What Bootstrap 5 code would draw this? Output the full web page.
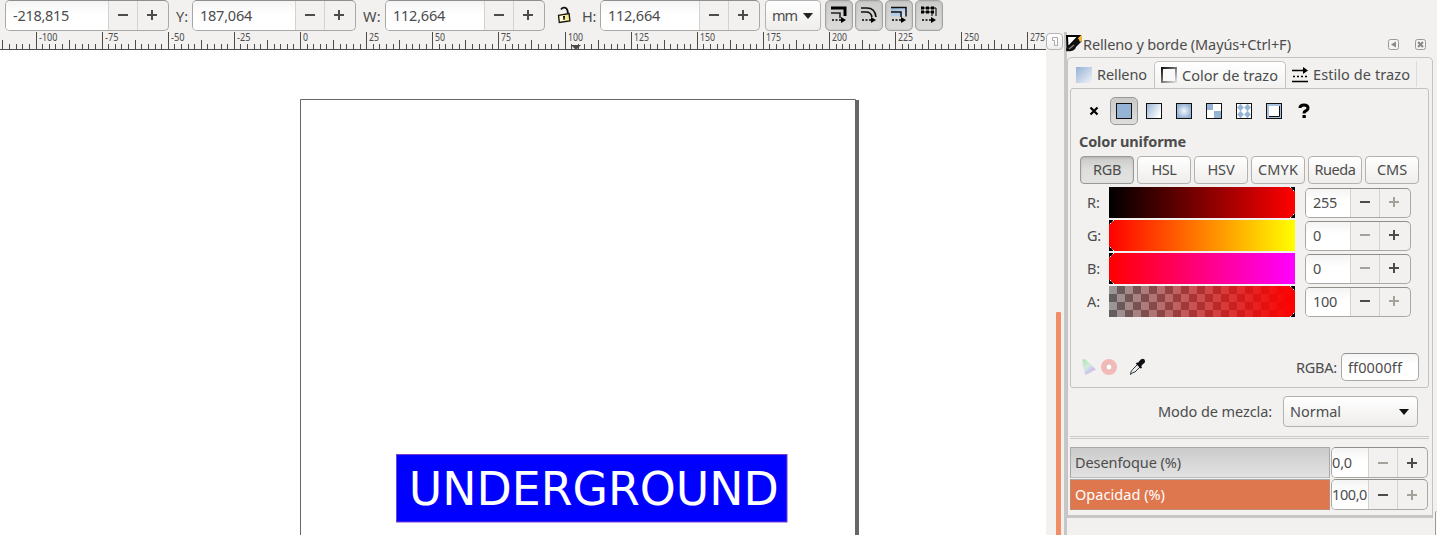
<!DOCTYPE html>
<html lang="es">
<head>
<meta charset="utf-8">
<title>Relleno y borde</title>
<link href="https://cdn.jsdelivr.net/npm/bootstrap@5.3.0/dist/css/bootstrap.min.css" rel="stylesheet">
<style>
body{background:#f2f1f0;color:#4c4c4c;font:14.5px/18px "Noto Sans","Open Sans",sans-serif;height:535px;overflow:hidden}
svg{display:block;flex:none}
.fit{display:inline-block;white-space:nowrap;flex:none;padding-bottom:1px}
.topbar{height:32px}
.topbar .fit{padding-bottom:2px}
.lab{flex:none}
.topbar .lab{padding-top:7px}
.spin{flex:none;height:31px;border:1px solid #a9a8a5;border-top-color:#8f8e8b;border-radius:5px;background:#f2f1f0;overflow:hidden}
.spin .val{flex:1;min-width:0;height:100%;padding-left:7px;background:linear-gradient(#f4f4f4,#fff 45%);display:flex;align-items:center;white-space:nowrap}
.spin .stepb{width:29px;height:100%;border:0;border-left:1px solid #d3d2d0;padding:0 0 2px;background:none;display:flex;align-items:center;justify-content:center;color:#4c4c4c;flex:none}
.spin .stepb.off{color:#a5a19b}
.spin .stepb:last-child{width:31px;padding-right:3px}
.combo,.pick{border:1px solid #b3b2af;border-radius:4px;background:linear-gradient(#fff,#eeedeb);color:#4c4c4c;flex:none;padding:0}
.pick{height:28px;width:54px;margin-right:3px;line-height:18px;padding-bottom:2px}
.down{border-color:#999;background:linear-gradient(#c9c9c8,#dededd 50%,#e3e3e2);box-shadow:inset 0 1px 2px #9997}
.tog{width:28px;height:31px;margin-right:2px;border:1px solid #a4a3a1;border-radius:5px;flex:none;padding:0;background:linear-gradient(#cbcbca,#dcdcdb);box-shadow:inset 0 0 2px #8888}
.stage{width:1046px;flex:none}
#ruler{overflow:visible}
.gutter{width:18px;flex:none}
.rbtn{width:17px;height:17px;margin-top:1px;border:1px solid #b5b4b2;border-radius:4px;background:linear-gradient(#fff,#eee)}
.thumb{width:5px;height:223px;background:#f08e68;margin:262px 0 0 10px;border-radius:1px 1px 0 0}
.dock{border-left:3px solid #c8c7c5;width:373px;position:relative}
.corner{position:absolute;right:0;bottom:0;width:2px;height:24px;border-left:1px solid #999;border-top:1px solid #bbb;border-radius:3px 0 0 0;background:#fafafa}
.outer{width:366px;height:461px;border:1px solid #c4c3c1;border-bottom:3px solid #c8c7c5;border-radius:5px 5px 0 0}
.tabs{height:30px;padding-top:3px}
.tabx{height:27px;display:flex;align-items:center}
.tabx.on{width:132px;border:1px solid #c4c3c1;border-bottom:0;border-radius:5px 5px 0 0;background:linear-gradient(#fff,#f2f1f0)}
.inner{width:359px;height:300px;margin-left:2px;border:1px solid #c4c3c1;border-radius:3px}
.kinds{height:28px;margin-top:8px}
.kind{width:30px;height:28px;display:flex;align-items:center;justify-content:center}
.kind.sel{width:28px;margin:0 1px;border:1px solid #999;border-radius:5px;background:linear-gradient(#c9c9c8,#dededd)}
.chan{height:31px;margin-bottom:2px}
.chan .lab{width:38px;padding-left:16px}
.chan .spin{width:106px;height:30px;margin-left:10px}
.strip{width:186px;height:31px;flex:none}
.hex{width:78px;height:28px;border:1px solid #a9a8a5;border-top-color:#8f8e8b;border-radius:5px;background:linear-gradient(#f5f5f5,#fff 40%);padding-left:6px;display:flex;align-items:center;flex:none}
.hexrow .fit{padding:0}
.rule2{height:3px;width:359px;margin:9px 0 0 2px;border:1px solid #cbcac8;border-width:1px 0}
.meter{width:260px;height:31px;border:1px solid #a9a8a8;border-bottom-color:#bbb;background:linear-gradient(#cbcbcb,#e2e2e2);padding-left:4px;display:flex;align-items:center;flex:none}
.meter.full{background:#df774e;color:#fff;border-color:#c08a74;border-top-color:#aaa}
.mrow .spin{width:97px;margin-left:1px}
.mrow .val{padding-left:0;flex:0 0 36px}
.mrow .spin .stepb{padding-bottom:0}
.mrow .spin .stepb:last-child{width:30px;padding-right:2px}
</style>
<script src="https://cdn.jsdelivr.net/npm/bootstrap@5.3.0/dist/js/bootstrap.bundle.min.js"></script>
</head>
<body>
<svg width="0" height="0" style="position:absolute"><defs>
<symbol id="minus" viewBox="0 0 12 12"><path d="M1 6h10" stroke="currentColor" stroke-width="2"/></symbol>
<symbol id="plus" viewBox="0 0 12 12"><path d="M1 6h10M6 1v10" stroke="currentColor" stroke-width="2"/></symbol>
<linearGradient id="gl" x2="1" y2=".6"><stop stop-color="#95b3d5"/><stop offset="1" stop-color="#fff"/></linearGradient>
<radialGradient id="gr"><stop stop-color="#f4f8fc"/><stop offset="1" stop-color="#95b3d5"/></radialGradient>
<linearGradient id="gf" x2="1" y2="1"><stop stop-color="#93b2d6"/><stop offset="1" stop-color="#f2f4f6"/></linearGradient>
<linearGradient id="gs" x2="1" y2="1"><stop stop-color="#111"/><stop offset="1" stop-color="#ddd"/></linearGradient>
<linearGradient id="gb" x2="1" y2="1"><stop stop-color="#91b4da"/><stop offset="1" stop-color="#d8e6f4"/></linearGradient>
<linearGradient id="gamut" x2=".7" y2="1"><stop stop-color="#a9e8ae"/><stop offset=".5" stop-color="#d3ebdf"/><stop offset=".75" stop-color="#c9c5f2"/><stop offset="1" stop-color="#f3b8c0"/></linearGradient>
</defs></svg>

<header class="topbar d-flex align-items-start">
  <div class="spin d-flex" style="margin-left:5px;width:164px"><div class="val"><span class="fit" data-w="56">-218,815</span></div><button class="stepb"><svg width="12" height="12"><use href="#minus"/></svg></button><button class="stepb"><svg width="12" height="12"><use href="#plus"/></svg></button></div>
  <div class="lab" style="width:23px;padding-left:7px"><span class="fit" data-w="12">Y:</span></div>
  <div class="spin d-flex" style="width:164px"><div class="val"><span class="fit" data-w="52">187,064</span></div><button class="stepb"><svg width="12" height="12"><use href="#minus"/></svg></button><button class="stepb"><svg width="12" height="12"><use href="#plus"/></svg></button></div>
  <div class="lab" style="width:29px;padding-left:7px"><span class="fit" data-w="18">W:</span></div>
  <div class="spin d-flex" style="width:160px"><div class="val"><span class="fit" data-w="52">112,664</span></div><button class="stepb"><svg width="12" height="12"><use href="#minus"/></svg></button><button class="stepb"><svg width="12" height="12"><use href="#plus"/></svg></button></div>
  <svg style="margin:6px 9px 0 11px" width="16" height="18" viewBox="0 0 16 18"><path d="M5 3.400C7 .6 10.700 1.400 11.500 4.500L12 8" fill="none" stroke="#111" stroke-width="1.800"/><path d="M2.500 9.300l10.600-1.700.8 7.400-10.600 1.500z" fill="#f8e98b" stroke="#111" stroke-width="1.300"/><path d="M3.700 10.200l4.300-.6.5 5-4.200.6z" fill="#fffbe0"/><path d="M8 10.300v3.500M7 10.800h2" stroke="#111" stroke-width="1.600"/></svg>
  <div class="lab" style="width:19px;padding-left:1px"><span class="fit" data-w="14">H:</span></div>
  <div class="spin d-flex" style="width:160px"><div class="val"><span class="fit" data-w="52">112,664</span></div><button class="stepb"><svg width="12" height="12"><use href="#minus"/></svg></button><button class="stepb"><svg width="12" height="12"><use href="#plus"/></svg></button></div>
  <button class="combo d-flex align-items-center" style="width:56px;height:31px;margin:0 4px 0 5px;padding-left:6px"><span class="fit" data-w="25">mm</span><svg width="10" height="6" style="margin-left:6px"><path d="M0 0h10L5 6z" fill="#222"/></svg></button>
  <button class="tog"><svg width="26" height="29" viewBox="0 0 26 29"><path d="M5 7h14v8" stroke="#000" stroke-width="3" fill="none"/><path d="M5 12h9v5" stroke="#222" stroke-width="1.600" fill="none"/><path d="M6 19h9" stroke="#000" stroke-width="1.500" stroke-dasharray="2 1.500"/><path d="M15 16l5 3-5 3z"/></svg></button>
  <button class="tog"><svg width="26" height="29" viewBox="0 0 26 29"><path d="M5 7h6q8 0 9 9M5 11h5q5 0 6 5" stroke="#111" stroke-width="1.700" fill="none"/><path d="M6 19h9" stroke="#000" stroke-width="1.500" stroke-dasharray="2 1.500"/><path d="M15 16l5 3-5 3z"/></svg></button>
  <button class="tog"><svg width="26" height="29" viewBox="0 0 26 29"><path d="M5 6h15v9h-5v-4H5z" fill="url(#gb)"/><path d="M5 15V11h10v4z" fill="#b4cde8"/><path d="M5 6.500h15v9M5 11h10v5" stroke="#111" stroke-width="1.500" fill="none"/><path d="M6 19h9" stroke="#000" stroke-width="1.500" stroke-dasharray="2 1.500"/><path d="M15 16l5 3-5 3z"/></svg></button>
  <button class="tog"><svg width="26" height="29" viewBox="0 0 26 29"><path d="M5 7h15M5 11h15" stroke="#000" stroke-width="3" stroke-dasharray="3 2"/><path d="M5 7h15v8M5 11h11v4" stroke="#000" fill="none"/><path d="M6 19h9" stroke="#000" stroke-width="1.500" stroke-dasharray="2 1.500"/><path d="M15 16l5 3-5 3z"/></svg></button>
</header>

<main class="d-flex">
  <section class="stage">
    <svg id="ruler" width="1046" height="18" font-size="10" fill="#4c4c4c"></svg>
    <svg width="1046" height="485" viewBox="0 50 1046 485"><rect y="50" width="1046" height="485" fill="#fff"/><path d="M855 100h4v435h-4z" fill="#666"/><path d="M300.500 536V99.500h555V536" fill="#fff" stroke="#666"/><rect x="396.500" y="454.500" width="390.500" height="67.500" fill="#00f" stroke="#7440d0"/><text x="408.800" y="504.500" font-family="DejaVu Sans, sans-serif" font-size="45.600" fill="#fff" textLength="370" lengthAdjust="spacingAndGlyphs">UNDERGROUND</text></svg>
  </section>
  <div class="gutter"><div class="rbtn"><svg width="15" height="15"><path d="M5.500 5V3.500h5v8h-3v-5h-2z" fill="#fff" stroke="#aaa"/></svg></div><div class="thumb"></div></div>
  <aside class="dock">
    <div class="d-flex align-items-center" style="height:25px;padding-top:1px;margin-left:-1px">
      <svg width="17" height="18" viewBox="0 0 17 18" style="margin-top:-2px"><path d="M1 1h12L1.500 13z" fill="#fff" stroke="#000" stroke-width="2"/><path d="M0 16c0-6 5-4 7-9l5-4 4 3-6 6c-1 4-6 5-10 4z" fill="#111"/><path d="M12 3l4-3v6l-2 1z" fill="#f4b52f"/><path d="M3 14l5-4" stroke="#888" stroke-width="1.500"/></svg>
      <span class="fit" data-w="208" style="padding-bottom:2px">Relleno y borde (Mayús+Ctrl+F)</span>
      <svg style="margin-left:97px" width="12" height="12"><rect x=".5" y=".5" width="10" height="10" rx="2" fill="#f5f4f3" stroke="#999"/><path d="M8 2.500v6L3 5.500z" fill="#888"/></svg>
      <svg style="margin-left:15px" width="12" height="12"><rect x=".5" y=".5" width="10" height="10" rx="2" fill="#f5f4f3" stroke="#999"/><path d="M3 3l5 5M8 3l-5 5" stroke="#888" stroke-width="2"/></svg>
    </div>
    <div class="outer">
      <div class="tabs d-flex">
        <div class="tabx" style="width:86px;padding-left:8px"><svg width="16" height="16"><rect width="16" height="16" fill="url(#gf)"/></svg><span class="fit" data-w="50" style="margin-left:5px">Relleno</span></div>
        <div class="tabx on" style="padding-left:6px"><svg width="16" height="16"><rect x="1" y="1" width="14" height="14" fill="#f8f8f8" stroke="url(#gs)" stroke-width="2"/></svg><span class="fit" data-w="96" style="margin-left:5px">Color de trazo</span></div>
        <div class="tabx" style="padding-left:6px"><svg width="16" height="16"><path d="M0 3.500h12M0 14.500h16" stroke="#000" stroke-width="1.500"/><path d="M11 0l5 3.500L11 7z"/><path d="M1 9.500h14" stroke="#000" stroke-width="1.500" stroke-dasharray="2 2"/></svg><span class="fit" data-w="97" style="margin-left:5px">Estilo de trazo</span></div>
        <div style="border-left:1px solid #dddcda;height:26px;margin-left:6px"></div>
      </div>
      <div class="inner">
        <div class="kinds d-flex" style="padding-left:8px">
          <div class="kind"><svg width="10" height="10"><path d="M1.500 1.500l7 7M8.500 1.500l-7 7" stroke="#000" stroke-width="2.200"/></svg></div>
          <div class="kind sel"><svg width="16" height="16"><rect x=".5" y=".5" width="15" height="15" fill="#95b3d5" stroke="#111"/></svg></div>
          <div class="kind"><svg width="16" height="16"><rect x=".5" y=".5" width="15" height="15" fill="url(#gl)" stroke="#111"/></svg></div>
          <div class="kind"><svg width="16" height="16"><rect x=".5" y=".5" width="15" height="15" fill="url(#gr)" stroke="#111"/></svg></div>
          <div class="kind"><svg width="16" height="16"><rect x=".5" y=".5" width="15" height="15" fill="#fff" stroke="#111"/><path d="M1 1h6v5H1zM8 6h7v5H8zM1 11h7v4H1z" fill="#95b3d5" opacity="0"/><path d="M1 1h6v6H1zM8 8h7v7H8z" fill="#95b3d5"/></svg></div>
          <div class="kind"><svg width="16" height="16"><rect x=".5" y=".5" width="15" height="15" fill="#fff" stroke="#111"/><path d="M4.500 1l3 3.500-3 3.500-3-3.500zM11.500 1l3 3.500-3 3.500-3-3.500zM4.500 8l3 3.500-3 3.500-3-3.500zM11.500 8l3 3.500-3 3.500-3-3.500z" fill="#95b3d5" stroke="#95b3d5" stroke-width=".6"/></svg></div>
          <div class="kind"><svg width="16" height="16"><rect x=".5" y=".5" width="15" height="15" fill="#a9c3df" stroke="#111"/><path d="M3 3h10v10H3z" fill="#fff"/><path d="M13.500 3v10.500H3" fill="none" stroke="#111"/></svg></div>
          <div class="kind"><svg width="12" height="16"><path d="M2 5Q2 2 6 2Q10 2 10 5Q10 7 7.500 8Q6 8.600 6 10.500M4.500 13.500h3.300" fill="none" stroke="#000" stroke-width="3"/></svg></div>
        </div>
        <div class="fw-bold" style="height:30px;padding:7px 0 0 8px"><span class="fit" data-w="107">Color uniforme</span></div>
        <div class="d-flex" style="padding:0 0 0 9px;height:31px;margin-top:1px">
          <button class="pick down"><span class="fit" data-w="28">RGB</span></button><button class="pick"><span class="fit" data-w="25">HSL</span></button><button class="pick"><span class="fit" data-w="27">HSV</span></button><button class="pick"><span class="fit" data-w="40">CMYK</span></button><button class="pick"><span class="fit" data-w="41">Rueda</span></button><button class="pick"><span class="fit" data-w="30">CMS</span></button>
        </div>
        <div class="chan d-flex align-items-center"><div class="lab"><span class="fit" data-w="13">R:</span></div><svg class="strip"><defs><linearGradient id="r"><stop/><stop offset="1" stop-color="#f00"/></linearGradient></defs><rect width="186" height="31" fill="url(#r)"/><path d="M181 0h5v5zM181 31h5v-5z"/><path d="M181 0l5 5M181 31l5-5" stroke="#fff" stroke-dasharray="2 2"/></svg><div class="spin d-flex"><div class="val"><span class="fit" data-w="24">255</span></div><button class="stepb"><svg width="12" height="12"><use href="#minus"/></svg></button><button class="stepb off"><svg width="12" height="12"><use href="#plus"/></svg></button></div></div>
        <div class="chan d-flex align-items-center"><div class="lab"><span class="fit" data-w="14">G:</span></div><svg class="strip"><defs><linearGradient id="g"><stop stop-color="#f00"/><stop offset="1" stop-color="#ff0"/></linearGradient></defs><rect width="186" height="31" fill="url(#g)"/><path d="M0 0h5L0 5zM0 31h5l-5-5z"/><path d="M5 0L0 5M5 31l-5-5" stroke="#fff" stroke-dasharray="2 2"/></svg><div class="spin d-flex"><div class="val"><span class="fit" data-w="8">0</span></div><button class="stepb off"><svg width="12" height="12"><use href="#minus"/></svg></button><button class="stepb"><svg width="12" height="12"><use href="#plus"/></svg></button></div></div>
        <div class="chan d-flex align-items-center"><div class="lab"><span class="fit" data-w="13">B:</span></div><svg class="strip"><defs><linearGradient id="b"><stop stop-color="#f00"/><stop offset="1" stop-color="#f0f"/></linearGradient></defs><rect width="186" height="31" fill="url(#b)"/><path d="M0 0h5L0 5zM0 31h5l-5-5z"/><path d="M5 0L0 5M5 31l-5-5" stroke="#fff" stroke-dasharray="2 2"/></svg><div class="spin d-flex"><div class="val"><span class="fit" data-w="8">0</span></div><button class="stepb off"><svg width="12" height="12"><use href="#minus"/></svg></button><button class="stepb"><svg width="12" height="12"><use href="#plus"/></svg></button></div></div>
        <div class="chan d-flex align-items-center"><div class="lab"><span class="fit" data-w="13">A:</span></div><svg class="strip"><defs><linearGradient id="a"><stop stop-color="#f00" stop-opacity="0"/><stop offset="1" stop-color="#f00"/></linearGradient><pattern id="ck" width="16" height="16" patternUnits="userSpaceOnUse"><path d="M0 0h16v16H0z" fill="#999"/><path d="M8 0h8v8H8zM0 8h8v8H0z" fill="#606060"/></pattern></defs><rect width="186" height="31" fill="url(#ck)"/><rect width="186" height="31" fill="url(#a)"/><path d="M181 0h5v5zM181 31h5v-5z"/><path d="M181 0l5 5M181 31l5-5" stroke="#fff" stroke-dasharray="2 2"/></svg><div class="spin d-flex"><div class="val"><span class="fit" data-w="24">100</span></div><button class="stepb"><svg width="12" height="12"><use href="#minus"/></svg></button><button class="stepb off"><svg width="12" height="12"><use href="#plus"/></svg></button></div></div>
        <div class="hexrow d-flex align-items-center" style="height:28px;margin-top:36px;padding-left:11px">
          <svg width="16" height="18"><path d="M.5 1.500Q3 0 5 3l9 8.500L3.500 17Q1 9 .5 1.500z" fill="url(#gamut)" stroke="#ddd" stroke-width=".5"/></svg>
          <svg width="16" height="16" style="margin-left:3px"><circle cx="8" cy="8" r="5.500" fill="#fafafa" stroke="#f2b9b7" stroke-width="5"/><circle cx="8" cy="8" r="3" fill="#fff" stroke="#ddbdbd"/></svg>
          <svg width="16" height="18" style="margin-left:12px"><path d="M1.500 16.500q0-3 2-5L10 5l2.500 2.500L6 14q-2 0-4.500 2.500z" fill="#e8edf2" stroke="#333"/><path d="M7.500 5l5 5M9 6l3.500-4q3-1 2.500 2l-4 3.500z" fill="#111" stroke="#111" stroke-width="1.800"/></svg>
          <span class="fit" data-w="41" style="margin-left:151px">RGBA:</span><div class="hex" style="margin-left:4px"><span class="fit" data-w="54">ff0000ff</span></div>
        </div>
      </div>
      <div class="d-flex align-items-center" style="height:31px;margin-top:8px;padding-left:90px"><span class="fit" data-w="114">Modo de mezcla:</span><button class="combo d-flex align-items-center justify-content-between" style="width:135px;height:31px;margin-left:11px;padding:0 8px 0 6px"><span class="fit" data-w="51">Normal</span><svg width="10" height="6"><path d="M0 0h10L5 6z" fill="#111"/></svg></button></div>
      <div class="rule2"></div>
      <div class="mrow d-flex" style="margin:8px 0 1px 2px"><div class="meter"><span class="fit" data-w="106">Desenfoque (%)</span></div><div class="spin d-flex"><div class="val"><span class="fit" data-w="20">0,0</span></div><button class="stepb off"><svg width="12" height="12"><use href="#minus"/></svg></button><button class="stepb"><svg width="12" height="12"><use href="#plus"/></svg></button></div></div>
      <div class="mrow d-flex" style="margin-left:2px"><div class="meter full"><span class="fit" data-w="90">Opacidad (%)</span></div><div class="spin d-flex"><div class="val"><span class="fit" data-w="35">100,0</span></div><button class="stepb"><svg width="12" height="12"><use href="#minus"/></svg></button><button class="stepb off"><svg width="12" height="12"><use href="#plus"/></svg></button></div></div>
    </div>
    <div class="corner"></div>
  </aside>
</main>
<script>
// Ruler: a tick every 2.5 mm, a label every 25 mm
const scale = 2.645, zero = 300;
let marks = '<path d="M0 17.500h1046" stroke="#4c4c4c"/>';
for (let i = -45; i < 112; i++) {
  const x = Math.round(zero + i * 2.5 * scale);
  if (x < 0 || x > 1045) continue;
  const top = i % 10 === 0 ? 0 : i % 5 === 0 ? 8 : 12;
  marks += `<path d="M${x + .5} ${top}V18" stroke="#4c4c4c"/>`;
  if (i % 10 === 0) {
    const t = String(i * 2.5), w = t.replace('-', '').length * 5 + (i < 0 ? 3.5 : 0);
    marks += `<text x="${x + 3}" y="9" textLength="${w}" lengthAdjust="spacingAndGlyphs">${t}</text>`;
  }
}
document.getElementById('ruler').innerHTML = marks + '<path d="M571 13h10l-5 5z"/>';
document.querySelectorAll('.fit').forEach(e => {
  const n = e.textContent.length, w = e.getBoundingClientRect().width;
  e.style.letterSpacing = (e.dataset.w - w) / n + 'px';
});
</script>
</body>
</html>
